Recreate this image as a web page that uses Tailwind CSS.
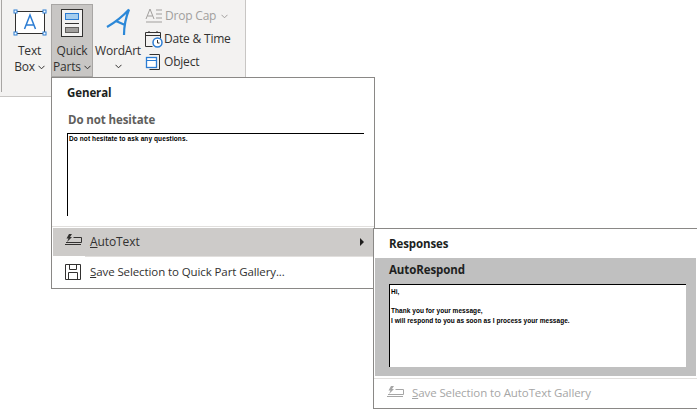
<!DOCTYPE html>
<html><head><meta charset="utf-8"><script src="https://cdn.jsdelivr.net/npm/@tailwindcss/browser@4"></script></head>
<body class="bg-white">
<div class="relative w-[697px] h-[409px] overflow-hidden bg-white font-['Open_Sans','Noto_Sans',sans-serif] text-[11.5px] tracking-[-0.1px] text-[#323130]">
  <!-- ribbon -->
  <div class="flex w-[246px] h-[97px] bg-[#f3f2f1] border-b border-r border-[#c8c6c4] text-[12px] tracking-[-0.2px]">
    <div class="w-px h-[92px] bg-[#a8a6a4] ml-px"></div>
    <div class="flex flex-col items-center w-[49px] pt-[8px] leading-[16px] whitespace-nowrap">
      <svg width="34" height="28" viewBox="0 0 34 28" class="shrink-0 ml-[7px]"><rect x="2.500" y="3.500" width="29" height="22" fill="#fff" stroke="#323130"/><g fill="#fff" stroke="#2b7cd3"><rect x="1" y="2" width="3" height="3"/><rect x="30" y="2" width="3" height="3"/><rect x="1" y="24" width="3" height="3"/><rect x="30" y="24" width="3" height="3"/></g><path d="M11.500 21 17 7l5.500 14M13.200 17h7.600" fill="none" stroke="#2b7cd3" stroke-width="1.500"/></svg>
      <div class="mt-[7px] ml-[6px] text-center">Text</div>
      <div class="ml-[6px] flex items-center">Box<svg class="ml-[3px]" width="7" height="5" viewBox="0 0 7 5"><path d="M.5.800 3.500 3.800 6.500.800" fill="none" stroke="#323130"/></svg></div>
    </div>
    <div class="flex flex-col items-center w-[42px] h-[73px] mt-[4px] bg-[#c8c6c4] border border-[#a8a6a4] pt-[4px] leading-[16px] whitespace-nowrap">
      <svg width="22" height="28" viewBox="0 0 22 28" class="shrink-0"><rect x="0.500" y="0.500" width="21" height="27" fill="#f3f2f1" stroke="#323130"/><rect x="4.500" y="4.500" width="13" height="6" fill="#a5cdee" stroke="#2b7cd3"/><path d="M4 14.500h14" stroke="#323130"/><rect x="4.500" y="18.500" width="13" height="5" fill="#a19f9d" stroke="#605e5c"/></svg>
      <div class="mt-[6px] text-center">Quick</div>
      <div class="flex items-center">Parts<svg class="ml-[3px]" width="7" height="5" viewBox="0 0 7 5"><path d="M.5.800 3.500 3.800 6.500.800" fill="none" stroke="#323130"/></svg></div>
    </div>
    <div class="flex flex-col items-center w-[50px] pt-[8px] leading-[16px] whitespace-nowrap">
      <svg width="26" height="28" viewBox="0 0 26 28" class="shrink-0"><path d="M2 19C9 15 18 8 24 1.500 21 9 19 18 19 27M11 13l9 4" fill="none" stroke="#2b88d8" stroke-width="2.200"/></svg>
      <div class="mt-[7px] text-center">WordArt</div>
      <svg class="mt-[5px]" width="7" height="5" viewBox="0 0 7 5"><path d="M.5.800 3.500 3.800 6.500.800" fill="none" stroke="#323130"/></svg>
    </div>
    <div class="flex flex-col pt-[6px] ml-[2px] gap-[3px] leading-[20px] whitespace-nowrap">
      <div class="flex items-center gap-[2px] text-[#a19f9d] h-[20px]"><svg width="18" height="18" viewBox="0 0 18 18"><path d="M1 12 5 2l4 10M2.500 9h5M11 3h6M11 7h6M11 11h6M1 15h16" fill="none" stroke="#a19f9d"/></svg>Drop Cap<svg class="ml-[3px]" width="7" height="5" viewBox="0 0 7 5"><path d="M.5.800 3.500 3.800 6.500.800" fill="none" stroke="#a19f9d"/></svg></div>
      <div class="flex items-center gap-[1px] h-[20px]"><svg width="18" height="18" viewBox="0 0 18 18"><path d="M.5 2.500h15v6M.5 2.500v14h7M.5 5.500h15M4 1v2M12 1v2" fill="none" stroke="#323130"/><circle cx="12.500" cy="12.500" r="4.500" fill="#fff" stroke="#2b7cd3" stroke-width="1.500"/><path d="M12.500 10v3h2" fill="none" stroke="#323130"/></svg>Date &amp; Time</div>
      <div class="flex items-center gap-[1px] h-[20px]"><svg width="18" height="18" viewBox="0 0 18 18"><path d="M4.500 1.500h10v15h-10" fill="none" stroke="#323130"/><rect x="1.500" y="4.500" width="10" height="10" fill="#fff" stroke="#2b7cd3" stroke-width="1.300"/><path d="M1.500 7.500h10" stroke="#2b7cd3"/></svg>Object</div>
    </div>
  </div>

  <!-- Quick Parts menu -->
  <div class="absolute left-[51px] top-[77px] w-[324px] h-[212px] bg-white border border-[#8a8886]">
    <div class="pl-[15px] pt-[6px] h-[28px] font-bold leading-[18px] text-[#201f1e]">General</div>
    <div class="pl-[16px] pt-[5px] h-[27px] font-bold leading-[18px] text-[#605e5c]">Do not hesitate</div>
    <div class="ml-[15px] w-[297px] h-[83px] border-t border-l border-black font-['Liberation_Sans',sans-serif] font-bold text-[6.500px] tracking-[0.1px] leading-[8px] pl-[1px] pt-[1px] text-black">Do not hesitate to ask any questions.</div>
    <div class="mt-[10px] h-px bg-[#e1dfdd]"></div>
    <div class="mt-[1px] ml-px flex items-center h-[28px] bg-[#cdcbc9] pl-[11px] pr-[10px] text-[12px] tracking-[-0.1px]">
      <svg width="18" height="14" viewBox="0 0 18 14" class="-mt-[2px]"><path d="M5 0h3L6 3h2L3 8l1.500-3.500h-2z" fill="#323130"/><path d="M9.500 3.500h8v5h-8M2 8.500h8M1 10.500h16" fill="none" stroke="#323130"/></svg>
      <span class="ml-[8px]"><u>A</u>utoText</span>
      <span class="ml-auto w-0 h-0 border-y-[4px] border-y-transparent border-l-[4px] border-l-[#201f1e]"></span>
    </div>
    <div class="ml-[33px] h-px bg-[#e1dfdd]"></div>
    <div class="flex items-center h-[30px] pl-[13px]">
      <svg width="16" height="16" viewBox="0 0 16 16"><path d="M.5.500h15v15H.5zM4.500.500v5h7v-5M3.500 15.500v-7h9v7" fill="none" stroke="#323130"/></svg>
      <span class="ml-[9px]"><u>S</u>ave Selection to Quick Part Gallery...</span>
    </div>
  </div>

  <!-- AutoText menu -->
  <div class="absolute left-[373px] top-[228px] w-[324px] h-[181px] bg-white border border-[#8a8886] border-r-0">
    <div class="pl-[15px] pt-[6px] h-[29px] font-bold leading-[18px] text-[#201f1e]">Responses</div>
    <div class="mx-px h-[118px] bg-[#c0c0c0]">
      <div class="pl-[14px] pt-[3px] h-[26px] font-bold leading-[18px] text-[#201f1e]">AutoRespond</div>
      <div class="ml-[14px] w-[297px] h-[83px] bg-white border-t border-l border-black font-['Liberation_Sans',sans-serif] font-bold text-[6.500px] tracking-[0.05px] leading-[9.500px] pl-[1px] pt-[2px] text-black">Hi,<br><br>Thank you for your message,<br>I will respond to you as soon as I process your message.</div>
    </div>
    <div class="mt-[2px] h-px bg-[#e1dfdd]"></div>
    <div class="flex items-center h-[28px] pl-[12px] text-[#a6a6a6]">
      <svg width="18" height="14" viewBox="0 0 18 14"><path d="M5 0h3L6 3h2L3 8l1.500-3.500h-2z" fill="#a6a6a6"/><path d="M9.500 3.500h8v5h-8M2 8.500h8M1 10.500h16" fill="none" stroke="#a6a6a6"/></svg>
      <span class="ml-[8px]"><u>S</u>ave Selection to AutoText Gallery</span>
    </div>
  </div>
</div>
</body></html>
